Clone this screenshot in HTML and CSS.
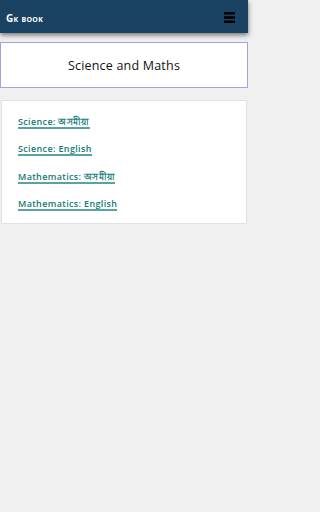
FILE: index.html
```html
<!DOCTYPE html>
<html>
<head>
<meta charset="utf-8">
<meta name="viewport" content="width=248">
<link rel="stylesheet" href="styles.css">
</head>
<body>
<div class="page">
  <header class="topbar">
    <div class="brand">Gk book</div>
    <svg class="menu" width="11" height="11" viewBox="0 0 11 11"><rect x="0" y="0" width="11" height="2.5" fill="#000"/><rect x="0" y="4.25" width="11" height="2.5" fill="#000"/><rect x="0" y="8.5" width="11" height="2.5" fill="#000"/></svg>
  </header>
  <main class="content">
    <section class="title-card">Science and Maths</section>
    <section class="list-card">
      <a class="link" href="#">Science: অসমীয়া</a>
      <a class="link" href="#">Science: English</a>
      <a class="link" href="#">Mathematics: অসমীয়া</a>
      <a class="link" href="#">Mathematics: English</a>
    </section>
  </main>
</div>
</body>
</html>
```
FILE: styles.css
```css
html, body {
  margin: 0;
  padding: 0;
  background: #f0f0f0;
  font-family: "Open Sans", "Noto Sans", sans-serif;
}
.page {
  width: 248px;
  min-height: 512px;
  background: #f0f0f0;
}
.topbar {
  height: 33px;
  background: #1a4262;
  display: flex;
  align-items: center;
  justify-content: space-between;
  padding: 0 13px 0 6px;
  box-shadow: 0 2px 5px rgba(0,0,0,0.55);
  position: relative;
  z-index: 1;
}
.brand {
  color: #fff;
  font-weight: 700;
  font-size: 10px;
  font-variant: small-caps;
  letter-spacing: 0.3px;
  padding-top: 2px;
}
.menu {
  display: block;
  margin-top: 2px;
}
.content {
  padding-top: 9px;
}
.title-card {
  background: #fff;
  border: 1px solid #a5a1dc;
  height: 44px;
  display: flex;
  align-items: center;
  justify-content: center;
  font-size: 12.5px;
  color: #111;
  letter-spacing: 0.2px;
}
.list-card {
  margin: 12px 1px 0;
  background: #fff;
  border: 1px solid #e2e2e2;
  padding: 14.5px 16px 12px;
  display: flex;
  flex-direction: column;
  align-items: flex-start;
  gap: 14.5px;
}
.link {
  display: block;
  font-size: 9px;
  font-weight: 600;
  color: #167878;
  text-decoration: none;
  border-bottom: 2px solid #5aa3a3;
  line-height: 11px;
  letter-spacing: 0.35px;
}
```
